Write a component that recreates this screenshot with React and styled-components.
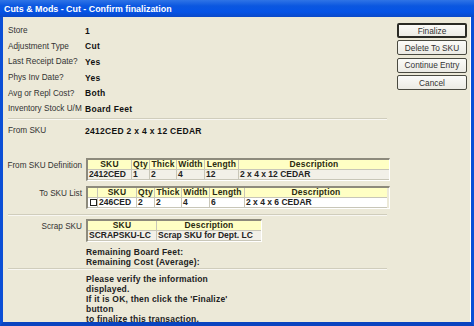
import React from "react";
import styled, { createGlobalStyle, css } from "styled-components";

const GlobalStyle = createGlobalStyle`
  html, body {
    margin: 0;
    padding: 0;
    background: #ece9d8;
  }
  body {
    font-family: "Liberation Sans", Arial, sans-serif;
  }
`;

const info = [
  ["Store", "1"],
  ["Adjustment Type", "Cut"],
  ["Last Receipt Date?", "Yes"],
  ["Phys Inv Date?", "Yes"],
  ["Avg or Repl Cost?", "Both"],
  ["Inventory Stock U/M", "Board Feet"],
];

const fromCols = [
  { title: "SKU", w: 44 },
  { title: "Qty", w: 18 },
  { title: "Thick", w: 27 },
  { title: "Width", w: 28 },
  { title: "Length", w: 34 },
  { title: "Description", w: 150 },
];

const toCols = [
  { title: "", w: 10 },
  { title: "SKU", w: 39 },
  { title: "Qty", w: 18 },
  { title: "Thick", w: 27 },
  { title: "Width", w: 28 },
  { title: "Length", w: 35 },
  { title: "Description", w: 142 },
];

const scrapCols = [
  { title: "SKU", w: 69 },
  { title: "Description", w: 104 },
];

const Grid = ({ cols, row, white }) => (
  <GridBox>
    <Row>
      {cols.map((c, i) => (
        <HeadCell key={i} style={{ width: c.w }}>
          {c.title}
        </HeadCell>
      ))}
    </Row>
    <Row>
      {cols.map((c, i) => (
        <DataCell key={i} $white={white} style={{ width: c.w }}>
          {row[i]}
        </DataCell>
      ))}
    </Row>
  </GridBox>
);

const App = () => (
  <>
    <GlobalStyle />
    <Window>
      <TitleBar>Cuts &amp; Mods - Cut - Confirm finalization</TitleBar>
      <Body>
        <Main>
          <InfoGrid>
            {info.map(([k, v]) => (
              <React.Fragment key={k}>
                <Label>{k}</Label>
                <Value>{v}</Value>
              </React.Fragment>
            ))}
          </InfoGrid>
          <Separator />
          <InfoGrid $top={3.6}>
            <Label>From SKU</Label>
            <Value>2412CED 2 x 4 x 12 CEDAR</Value>
          </InfoGrid>
          <TableSection $top={19.2} $bottom={4}>
            <SideLabel>From SKU Definition</SideLabel>
            <Grid
              cols={fromCols}
              row={["2412CED", "1", "2", "4", "12", "2 x 4 x 12 CEDAR"]}
            />
            <SideLabel>To SKU List</SideLabel>
            <Grid
              cols={toCols}
              white
              row={[<Check key="c" />, "246CED", "2", "2", "4", "6", "2 x 4 x 6 CEDAR"]}
            />
          </TableSection>
          <Separator />
          <TableSection $top={3} $bottom={0}>
            <SideLabel>Scrap SKU</SideLabel>
            <Grid
              cols={scrapCols}
              row={["SCRAPSKU-LC", "Scrap SKU for Dept. LC"]}
            />
          </TableSection>
          <Remaining>
            <div>Remaining Board Feet:</div>
            <div>Remaining Cost (Average):</div>
          </Remaining>
          <Separator />
          <Message>
            Please verify the information
            <br />
            displayed.
            <br />
            If it is OK, then click the 'Finalize'
            <br />
            button
            <br />
            to finalize this transaction.
          </Message>
        </Main>
        <Buttons>
          <Button $primary>Finalize</Button>
          <Button>Delete To SKU</Button>
          <Button>Continue Entry</Button>
          <Button>Cancel</Button>
        </Buttons>
      </Body>
    </Window>
  </>
);

const Window = styled.div`
  width: 474px;
  height: 326px;
  display: flex;
  flex-direction: column;
  overflow: hidden;
  font-size: 8.5px;
  color: #222;
`;

const TitleBar = styled.div`
  height: 17px;
  flex: none;
  display: flex;
  align-items: center;
  padding-left: 4px;
  color: #fff;
  font-weight: bold;
  font-size: 8.9px;
  background: linear-gradient(#2f74e6, #0b57e0 35%, #0553e6 70%, #0a49c8);
`;

const Body = styled.div`
  flex: 1;
  min-height: 0;
  display: flex;
  background: #ece9d8;
  border-left: 3px solid #0b4fd6;
  border-right: 3px solid #0b4fd6;
  border-bottom: 4px solid #0a44c0;
  box-shadow: inset -1px 0 0 #fff;
`;

const Main = styled.div`
  width: 379px;
  padding: 6px 0 0 5px;
  display: flex;
  flex-direction: column;
`;

const InfoGrid = styled.div`
  display: grid;
  grid-template-columns: 77px 1fr;
  grid-auto-rows: 15.6px;
  align-items: center;
  margin-top: ${({ $top = 0 }) => $top}px;
`;

const Label = styled.div`
  color: #333;
  font-size: 8.2px;
  white-space: nowrap;
`;

const Value = styled.div`
  font-weight: bold;
  letter-spacing: 0.3px;
  color: #111;
`;

const Separator = styled.div`
  flex: none;
  height: 0;
  border-top: 1px solid #d0cdbc;
  border-bottom: 1px solid #f8f7f2;
  margin: 1px 0 0;
`;

const TableSection = styled.div`
  display: grid;
  grid-template-columns: 78px auto;
  row-gap: 5px;
  justify-content: start;
  align-items: start;
  margin: ${({ $top }) => $top}px 0 ${({ $bottom }) => $bottom}px 0;
`;

const SideLabel = styled.div`
  text-align: right;
  padding: 3px 4px 0 0;
  margin-left: -4px;
  color: #333;
  font-size: 8.2px;
  white-space: nowrap;
`;

const GridBox = styled.div`
  display: flex;
  flex-direction: column;
  border-top: 2px solid #8d8a7c;
  border-left: 2px solid #8d8a7c;
  border-right: 1px solid #fff;
  border-bottom: 1px solid #fff;
`;

const Row = styled.div`
  display: flex;
`;

const cellBase = css`
  box-sizing: border-box;
  height: 10px;
  line-height: 9.5px;
  border-right: 1px solid #c8c6b8;
  border-bottom: 1px solid #c8c6b8;
  white-space: nowrap;
  overflow: hidden;
  &:last-child {
    border-right: none;
  }
`;

const HeadCell = styled.div`
  ${cellBase};
  background: #ffffc4;
  font-weight: bold;
  text-align: center;
  color: #2a2a10;
  letter-spacing: 0.2px;
`;

const DataCell = styled.div`
  ${cellBase};
  background: ${({ $white }) => ($white ? "#ffffff" : "#f2f0e8")};
  font-weight: bold;
  padding-left: 1px;
  color: #222;
  display: flex;
  align-items: center;
`;

const Check = styled.span`
  display: inline-block;
  width: 5px;
  height: 5px;
  border: 1px solid #222;
  margin-left: 1px;
`;

const Remaining = styled.div`
  padding: 5px 0 0 78px;
  font-weight: bold;
  line-height: 10px;
  color: #222;
  letter-spacing: 0.2px;
`;

const Message = styled.div`
  padding: 4px 0 0 78px;
  font-weight: bold;
  line-height: 10px;
  color: #222;
  letter-spacing: 0.2px;
`;

const Buttons = styled.div`
  margin-left: 10px;
  padding-top: 6px;
  display: flex;
  flex-direction: column;
  gap: 2.4px;
`;

const Button = styled.div`
  box-sizing: border-box;
  width: 70px;
  height: 15px;
  display: flex;
  align-items: center;
  justify-content: center;
  border: 1px solid #4a4a40;
  border-radius: 2px;
  background: linear-gradient(#fbfbf8, #ecebe4);
  color: #333;
  font-size: 8.3px;
  ${({ $primary }) =>
    $primary &&
    css`
      border: 2px solid #2a2a24;
    `}
`;

export default App;
